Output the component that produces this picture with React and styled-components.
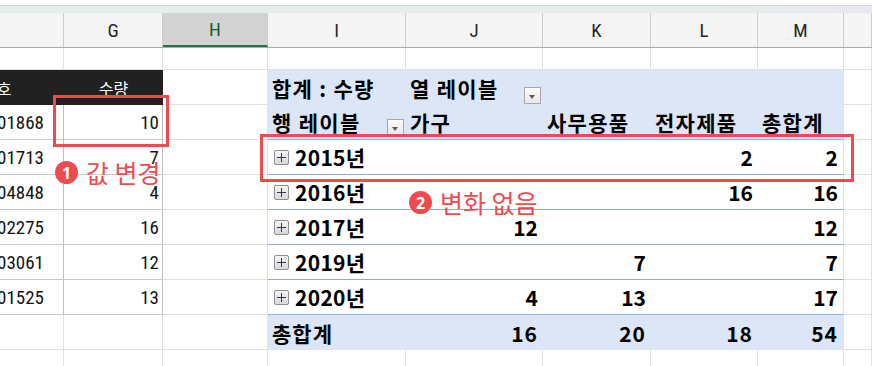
import React from "react";
import styled, { createGlobalStyle, css } from "styled-components";

const GlobalStyle = createGlobalStyle`
  html, body {
    margin: 0;
    padding: 0;
    background: #ffffff;
  }
  body {
    font-family: "Noto Sans CJK KR", "Noto Sans", sans-serif;
    overflow: hidden;
  }
`;

// visible column widths, F is cut at the left edge, N at the right edge
const COLUMNS = [
    { key: "F", label: "", width: 64 },
    { key: "G", label: "G", width: 99 },
    { key: "H", label: "H", width: 105, selected: true },
    { key: "I", label: "I", width: 138 },
    { key: "J", label: "J", width: 137 },
    { key: "K", label: "K", width: 108 },
    { key: "L", label: "L", width: 107 },
    { key: "M", label: "M", width: 86 },
    { key: "N", label: "", width: 28 },
];

const TEMPLATE = COLUMNS.map((c) => c.width + "px").join(" ");

const NARROW = `"Liberation Sans Narrow", "Roboto Condensed", "Noto Sans CJK KR", sans-serif`;
const KOREAN = `"Noto Sans CJK KR", "Noto Sans", sans-serif`;
const RED = "#ee4b51";
const PIVOT_BG = "#dce6f6";
const PIVOT_LINE = "#8eaadb";
const GRID_LINE = "#e1e1e1";

const Sheet = styled.div`
    position: relative;
    width: 872px;
    height: 366px;
    overflow: hidden;
    background: #ffffff;
`;

const FormulaStrip = styled.div`
    margin-top: 5px;
    height: 7px;
    border-top: 1px solid #d6d6d6;
    background: linear-gradient(90deg, #e4eeea 0%, #e5eeeb 82%, #e9e8f1 100%);
`;

const HeaderRow = styled.div`
    display: grid;
    grid-template-columns: ${TEMPLATE};
    height: 34px;
    background: #f5f5f5;
    border-bottom: 1px solid #ababab;
`;

const ColHeader = styled.div`
    display: flex;
    align-items: center;
    justify-content: center;
    box-sizing: border-box;
    border-right: 1px solid #cacaca;
    font-family: ${NARROW};
    font-size: 19px;
    color: #262626;

    ${(p) => p.$selected && css`
        background: #d3d3d3;
        color: #175c37;
        border-bottom: 2px solid #217346;
    `}
`;

const GridRow = styled.div`
    display: grid;
    grid-template-columns: ${TEMPLATE};
    height: ${(p) => p.$h}px;
`;

const tones = {
    plain: css`
        border-right: 1px solid ${GRID_LINE};
        border-bottom: 1px solid ${GRID_LINE};
    `,
    table: css`
        border-right: 1px solid #bfbfbf;
        border-bottom: 1px solid #c9c9c9;
        font-family: ${NARROW};
        font-size: 19px;
        color: #141414;
    `,
    dark: css`
        background: #212121;
        color: #ffffff;
        font-family: ${KOREAN};
        font-size: 16px;
    `,
    pivotHead: css`
        background: ${PIVOT_BG};
        font-weight: 700;
        letter-spacing: 1.3px;
    `,
    pivot: css`
        font-weight: 700;
        border-bottom: 1px solid ${PIVOT_LINE};
    `,
    pivotTotal: css`
        background: ${PIVOT_BG};
        font-weight: 700;
        letter-spacing: 1px;
    `,
};

const Cell = styled.div`
    display: flex;
    align-items: center;
    box-sizing: border-box;
    min-width: 0;
    overflow: hidden;
    white-space: nowrap;
    font-family: ${KOREAN};
    font-size: 21px;
    color: #000000;
    padding: ${(p) => p.$pad || "0 4px"};
    justify-content: ${(p) => (p.$align === "right" ? "flex-end" : p.$align === "center" ? "center" : "flex-start")};
    ${(p) => tones[p.$tone || "plain"]}
    ${(p) => p.$line && css`border-bottom: 1px solid ${PIVOT_LINE};`}
    ${(p) => p.$edge && css`border-right: 1px solid ${GRID_LINE};`}
`;

const Clip = styled.span`
    flex: none;
    margin-left: ${(p) => p.$shift}px;
`;

const DropButton = styled.span`
    position: relative;
    flex: none;
    align-self: flex-end;
    margin: 0 -2px ${(p) => p.$bottom}px auto;
    width: 17px;
    height: 17px;
    box-sizing: border-box;
    border: 1px solid #a8a8a8;
    background: linear-gradient(#fbfbfb, #e8e8e8);

    &::after {
        content: "";
        position: absolute;
        left: 4px;
        top: 7px;
        border-left: 3.5px solid transparent;
        border-right: 3.5px solid transparent;
        border-top: 4px solid #5a5a5a;
    }
`;

const ExpandBox = styled.span`
    position: relative;
    flex: none;
    width: 15px;
    height: 15px;
    margin: 0 6px 0 2px;
    box-sizing: border-box;
    border: 1px solid #8f8f8f;
    border-radius: 2px;
    background: linear-gradient(#f5f5f5, #d8d8d8);

    &::before,
    &::after {
        content: "";
        position: absolute;
        background: #2b3a5c;
    }
    &::before {
        left: 2px;
        right: 2px;
        top: 6px;
        height: 1px;
    }
    &::after {
        top: 2px;
        bottom: 2px;
        left: 6px;
        width: 1px;
    }
`;

const YearLabel = styled.span`
    letter-spacing: 0.3px;
`;

const RedBox = styled.div`
    position: absolute;
    left: ${(p) => p.$x}px;
    top: ${(p) => p.$y}px;
    width: ${(p) => p.$w}px;
    height: ${(p) => p.$h}px;
    box-sizing: border-box;
    border: 3px solid ${RED};
    pointer-events: none;
`;

const Note = styled.div`
    position: absolute;
    left: ${(p) => p.$x}px;
    top: ${(p) => p.$y}px;
    display: flex;
    align-items: center;
    gap: 8px;
    white-space: nowrap;
`;

const Badge = styled.span`
    display: flex;
    align-items: center;
    justify-content: center;
    width: 23px;
    height: 23px;
    border-radius: 50%;
    background: ${RED};
    color: #ffffff;
    font-family: "Open Sans", sans-serif;
    font-weight: 700;
    font-size: 16px;
    line-height: 1;
`;

const NoteText = styled.span`
    font-family: ${KOREAN};
    font-size: 25px;
    color: ${RED};
    line-height: 1;
`;

const ORDERS = [
    ["2020001868", 10],
    ["2020001713", 7],
    ["2020004848", 4],
    ["2020002275", 16],
    ["2020003061", 12],
    ["2020001525", 13],
];

const PIVOT_ROWS = [
    { year: "2015년", values: ["", "", "2", "2"] },
    { year: "2016년", values: ["", "", "16", "16"] },
    { year: "2017년", values: ["12", "", "", "12"] },
    { year: "2019년", values: ["", "7", "", "7"] },
    { year: "2020년", values: ["4", "13", "", "17"] },
];

const TOTALS = ["16", "20", "18", "54"];
const CATEGORIES = ["가구", "사무용품", "전자제품", "총합계"];

function OrderCells({ order }) {
    return (
        <>
            <Cell $tone="table" $align="right" $pad="0 19px 0 0">{order[0]}</Cell>
            <Cell $tone="table" $align="right" $pad="0 3px 0 0">{order[1]}</Cell>
        </>
    );
}

function BlankRow({ h }) {
    return (
        <GridRow $h={h}>
            {COLUMNS.map((c) => (
                <Cell key={c.key} />
            ))}
        </GridRow>
    );
}

export default function App() {
    return (
        <Sheet>
            <GlobalStyle />
            <FormulaStrip />

            <HeaderRow>
                {COLUMNS.map((c) => (
                    <ColHeader key={c.key} $selected={c.selected}>{c.label}</ColHeader>
                ))}
            </HeaderRow>

            <BlankRow h={22} />

            <GridRow $h={35}>
                <Cell $tone="dark"><Clip $shift={-22}>번호</Clip></Cell>
                <Cell $tone="dark" $align="center">수량</Cell>
                <Cell />
                <Cell $tone="pivotHead">합계 : 수량</Cell>
                <Cell $tone="pivotHead">
                    열 레이블
                    <DropButton $bottom={1} />
                </Cell>
                <Cell $tone="pivotHead" />
                <Cell $tone="pivotHead" />
                <Cell $tone="pivotHead" $edge />
                <Cell />
            </GridRow>

            <GridRow $h={35}>
                <OrderCells order={ORDERS[0]} />
                <Cell />
                <Cell $tone="pivotHead" $line>
                    행 레이블
                    <DropButton $bottom={3} />
                </Cell>
                {CATEGORIES.map((label, i) => (
                    <Cell key={label} $tone="pivotHead" $line $edge={i === 3}>{label}</Cell>
                ))}
                <Cell />
            </GridRow>

            {PIVOT_ROWS.map((row, r) => (
                <GridRow key={row.year} $h={35}>
                    <OrderCells order={ORDERS[r + 1]} />
                    <Cell />
                    <Cell $tone="pivot">
                        <ExpandBox />
                        <YearLabel>{row.year}</YearLabel>
                    </Cell>
                    {row.values.map((v, i) => (
                        <Cell key={i} $tone="pivot" $align="right" $pad="0 5px 0 0" $edge={i === 3}>{v}</Cell>
                    ))}
                    <Cell />
                </GridRow>
            ))}

            <GridRow $h={35}>
                <Cell />
                <Cell />
                <Cell />
                <Cell $tone="pivotTotal">총합계</Cell>
                {TOTALS.map((v, i) => (
                    <Cell key={i} $tone="pivotTotal" $align="right" $pad="0 5px 0 0" $edge={i === 3}>{v}</Cell>
                ))}
                <Cell />
            </GridRow>

            <BlankRow h={35} />

            <RedBox $x={53} $y={95} $w={116} $h={52} />
            <RedBox $x={260} $y={134} $w={594} $h={48} />

            <Note $x={55} $y={160}>
                <Badge>1</Badge>
                <NoteText>값 변경</NoteText>
            </Note>
            <Note $x={409} $y={190}>
                <Badge>2</Badge>
                <NoteText>변화 없음</NoteText>
            </Note>
        </Sheet>
    );
}
